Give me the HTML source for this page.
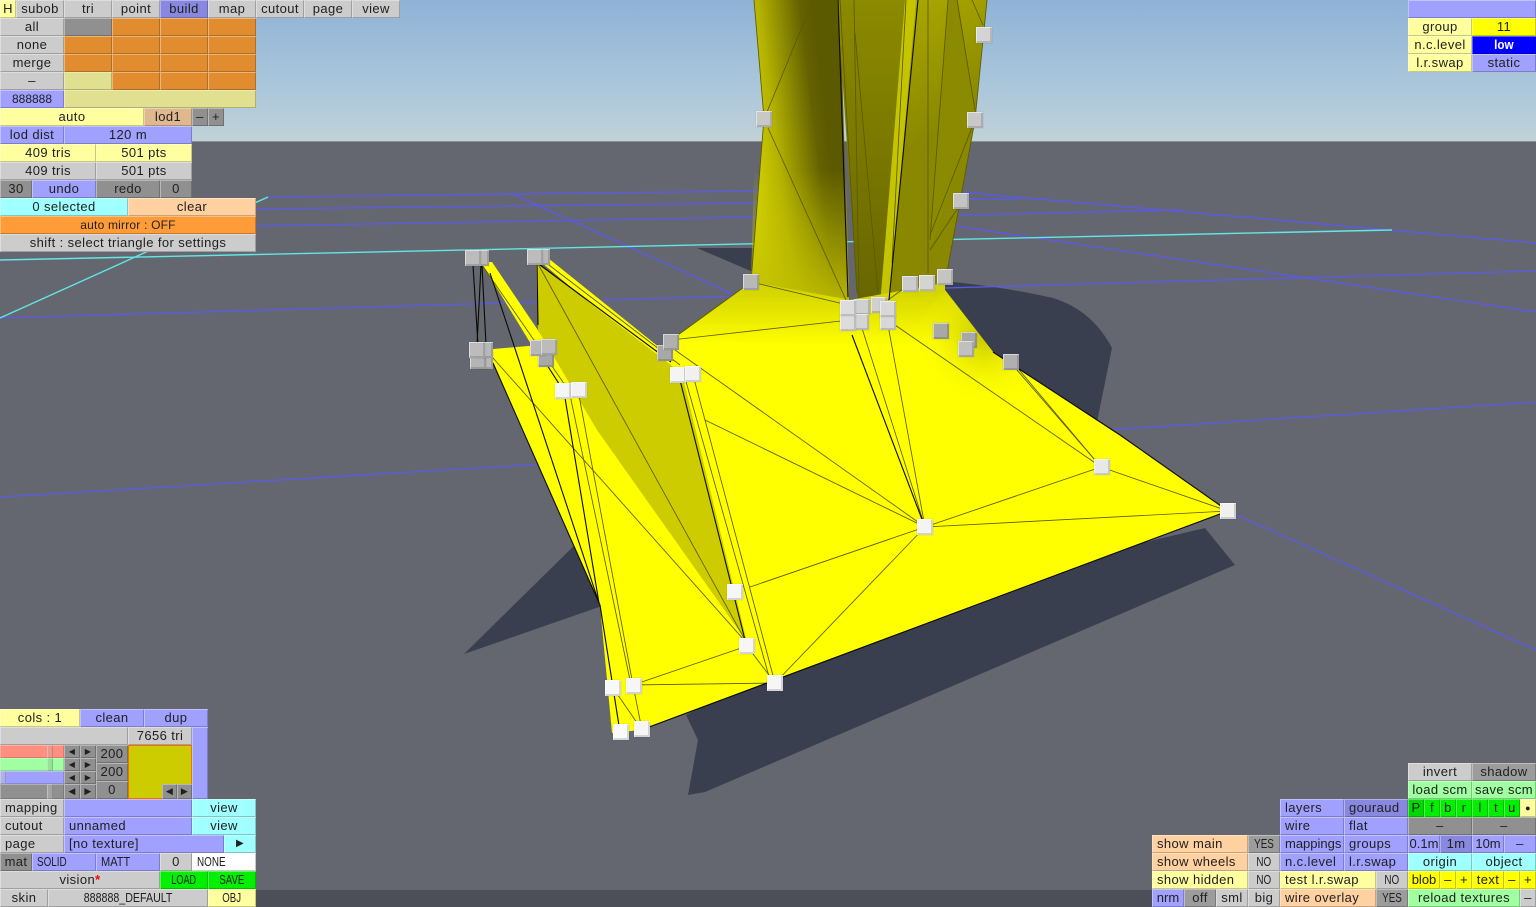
<!DOCTYPE html>
<html><head><meta charset="utf-8"><style>
html,body{margin:0;padding:0;width:1536px;height:907px;overflow:hidden;background:#646770}
#s{position:absolute;left:0;top:0}
.b{position:absolute;height:18px;text-align:center;font:13px/18px "Liberation Sans",sans-serif;letter-spacing:.4px;color:#202020;box-sizing:border-box;white-space:nowrap;box-shadow:inset 1px 1px 0 rgba(255,255,255,.36),inset -1px -1px 0 rgba(0,0,0,.22);background:#ccc}
.l{text-align:left;padding-left:5px}
.x{display:inline-block;transform:scaleX(.76);letter-spacing:0}
.l .x{transform-origin:0 50%}
.e{font-size:12px;letter-spacing:0}
.d{background:#909090}.y{background:#ffffa0}.u{background:#a0a0ff}.v{background:#8888e0}.o{background:#e28c30}.c{background:#a0ffff}.p{background:#ffd0a0}.n{background:#e0e090}.t{background:#e0b890}.a{background:#ff9c38}.G{background:#00f000}.h{background:#a0ffa0}.Y{background:#ffff00}.w{background:#fff}.B{background:#00f;color:#fff;font-weight:bold}.P{background:#00d800}.q{background:#9c9c9c}
.k{position:absolute;width:16px;height:16px;box-sizing:border-box;box-shadow:inset 1px 1px 0 rgba(255,255,255,.5),inset -2px -2px 0 rgba(0,0,0,.14),0 0 0 .5px rgba(0,0,0,.08)}
.s{position:absolute;box-sizing:border-box;box-shadow:inset 1px 1px 0 rgba(255,255,255,.3),inset -1px -1px 0 rgba(0,0,0,.15)}
</style></head><body>
<svg id="s" width="1536" height="907" viewBox="0 0 1536 907" xmlns="http://www.w3.org/2000/svg">
<defs>
<linearGradient id="sky" x1="0" y1="0" x2="0" y2="1"><stop offset="0" stop-color="#8fb2d6"/><stop offset=".6" stop-color="#aac6da"/><stop offset="1" stop-color="#c0d2d8"/></linearGradient>
<linearGradient id="ta" gradientUnits="userSpaceOnUse" x1="755" y1="200" x2="835" y2="190"><stop offset="0" stop-color="#d4d400"/><stop offset=".35" stop-color="#b4b200"/><stop offset=".85" stop-color="#646200"/><stop offset="1" stop-color="#5c5a00"/></linearGradient>
<linearGradient id="tl" gradientUnits="userSpaceOnUse" x1="0" y1="170" x2="0" y2="295"><stop offset="0" stop-color="#c0be00" stop-opacity="0"/><stop offset="1" stop-color="#c0be00" stop-opacity=".85"/></linearGradient>
<linearGradient id="tb" gradientUnits="userSpaceOnUse" x1="870" y1="0" x2="870" y2="300"><stop offset="0" stop-color="#8c8a00"/><stop offset="1" stop-color="#686600"/></linearGradient>
<linearGradient id="tc" gradientUnits="userSpaceOnUse" x1="920" y1="0" x2="985" y2="100"><stop offset="0" stop-color="#a8a600"/><stop offset="1" stop-color="#8a8800"/></linearGradient>
<linearGradient id="fl" gradientUnits="userSpaceOnUse" x1="900" y1="290" x2="900" y2="345"><stop offset="0" stop-color="#d4d400"/><stop offset="1" stop-color="#ffff00"/></linearGradient>
<radialGradient id="fr" gradientUnits="userSpaceOnUse" cx="985" cy="335" r="70"><stop offset="0" stop-color="#c4c400"/><stop offset="1" stop-color="#ffff00" stop-opacity="0"/></radialGradient>
</defs>
<rect width="1536" height="141" fill="url(#sky)"/>
<rect y="141" width="1536" height="766" fill="#646770"/>
<rect y="141" width="1536" height="1" fill="#8a8f92"/>
<rect x="256" y="890" width="896" height="17" fill="#4c4f58"/>
<g fill="#3a3f50">
<polygon points="697,248 760,248 760,275"/>
<path d="M945,282 L953,282 Q1010,288 1053,298 Q1092,310 1112,348 L1097,422 L1000,400 L900,300Z"/>
<polygon points="1205,528 1235,565 705,792 688,795 698,740 686,715 900,600"/>
<polygon points="464,654 590,530 602,606"/>
</g>
<g stroke="#5a5ae8" stroke-width="1.3" fill="none">
<line x1="267" y1="197" x2="760" y2="191"/>
<line x1="256" y1="209" x2="760" y2="203"/>
<line x1="256" y1="226" x2="760" y2="217"/>
<line x1="0" y1="318" x2="740" y2="296"/>
<line x1="515" y1="195" x2="735" y2="295"/>
<line x1="0" y1="497" x2="560" y2="463"/>
<line x1="1090" y1="431" x2="1536" y2="402"/>
<line x1="1228" y1="511" x2="1536" y2="650"/>
<line x1="960" y1="192" x2="1536" y2="243"/>
<line x1="960" y1="215" x2="1180" y2="210"/>
<line x1="955" y1="226" x2="1536" y2="312"/>
<line x1="945" y1="288" x2="1536" y2="271"/>
<line x1="900" y1="200" x2="1020" y2="199"/>
</g>
<g stroke="#62e6e6" stroke-width="1.4" fill="none">
<line x1="0" y1="260" x2="1392" y2="230"/>
<line x1="0" y1="318" x2="268" y2="197"/>
</g>
<!-- tower -->
<polygon points="754,0 840,0 849,300 751,282 764,118" fill="url(#ta)"/>
<polygon points="754,170 846,170 849,300 751,282" fill="url(#tl)"/>
<polygon points="837,0 906,0 888,305 858,305" fill="url(#tb)"/>
<polygon points="905,0 918,0 889,305 880,305" fill="#c4c400"/>
<polygon points="916,0 987,0 975,120 945,283 889,305" fill="url(#tc)"/>
<polygon points="948,0 958,0 975,112 930,250" fill="#8c8a00"/>
<!-- floor -->
<polygon points="493,349 540,345 600,400 671,340 751,282 850,300 945,283 945,290 993,352 1120,435 1228,511 641,730 612,733 600,605 493,363" fill="#ffff00"/>
<polygon points="671,340 751,282 850,300 945,283 945,290 993,352 900,345 850,345" fill="url(#fl)"/>
<polygon points="945,290 993,352 1120,435 1000,440 900,340" fill="url(#fr)"/>
<polygon points="481,262 492,262 585,400 565,400" fill="#ffff00"/>
<polygon points="536,258 548,258 690,372 672,372" fill="#ffff00"/>
<polygon points="536,262 671,365 683,378 747,642 597,430 538,330" fill="#cccc00"/>
<!-- wire -->
<g stroke="#5c5a00" stroke-width=".85" fill="none">
<line x1="813" y1="0" x2="767" y2="112"/><line x1="768" y1="128" x2="846" y2="300"/><line x1="854" y1="0" x2="859" y2="297"/><line x1="840" y1="0" x2="857" y2="293"/><line x1="855" y1="33" x2="878" y2="293"/><line x1="906" y1="0" x2="892" y2="263"/><line x1="928" y1="0" x2="928" y2="273"/><line x1="948" y1="0" x2="930" y2="240"/><line x1="957" y1="0" x2="975" y2="110"/><line x1="972" y1="0" x2="983" y2="25"/><line x1="973" y1="125" x2="930" y2="235"/><line x1="960" y1="205" x2="930" y2="250"/><line x1="754" y1="0" x2="764" y2="118"/><line x1="764" y1="118" x2="751" y2="282"/><line x1="987" y1="0" x2="975" y2="120"/><line x1="975" y1="120" x2="945" y2="283"/>
<line x1="751" y1="282" x2="848" y2="305"/><line x1="671" y1="340" x2="850" y2="320"/><line x1="671" y1="340" x2="751" y2="282"/><line x1="910" y1="284" x2="888" y2="300"/>
<line x1="925" y1="527" x2="1101" y2="467"/><line x1="925" y1="527" x2="1228" y2="511"/><line x1="925" y1="527" x2="861" y2="325"/><line x1="925" y1="527" x2="888" y2="325"/><line x1="925" y1="527" x2="705" y2="420"/><line x1="925" y1="527" x2="675" y2="350"/><line x1="925" y1="527" x2="750" y2="587"/><line x1="925" y1="527" x2="775" y2="683"/>
<line x1="1101" y1="467" x2="895" y2="325"/><line x1="1101" y1="467" x2="1010" y2="362"/><line x1="1095" y1="460" x2="1015" y2="365"/><line x1="1101" y1="467" x2="1228" y2="511"/>
<line x1="537" y1="262" x2="745" y2="640"/><line x1="545" y1="262" x2="680" y2="365"/><line x1="493" y1="358" x2="745" y2="641"/><line x1="578" y1="390" x2="633" y2="685"/><line x1="570" y1="395" x2="630" y2="680"/><line x1="693" y1="375" x2="775" y2="683"/><line x1="685" y1="378" x2="770" y2="680"/><line x1="480" y1="262" x2="565" y2="385"/>
<line x1="747" y1="646" x2="633" y2="685"/><line x1="633" y1="685" x2="775" y2="683"/><line x1="775" y1="683" x2="747" y2="646"/><line x1="613" y1="688" x2="642" y2="730"/><line x1="633" y1="685" x2="642" y2="730"/>
</g>
<g stroke="#0a0a00" stroke-width="1.1" fill="none">
<line x1="838" y1="0" x2="848" y2="297"/><line x1="918" y1="0" x2="889" y2="300"/>
<line x1="473" y1="265" x2="478" y2="345"/><line x1="481" y1="265" x2="477" y2="345"/><line x1="482" y1="265" x2="486" y2="345"/><line x1="490" y1="273" x2="599" y2="603"/>
<line x1="536" y1="262" x2="671" y2="362"/><line x1="547" y1="365" x2="563" y2="390"/><line x1="565" y1="398" x2="599" y2="603"/>
<line x1="852" y1="335" x2="923" y2="522"/><line x1="680" y1="380" x2="745" y2="640"/>
<line x1="493" y1="363" x2="600" y2="605"/><line x1="600" y1="605" x2="620" y2="732"/><line x1="641" y1="730" x2="1228" y2="511"/>
<line x1="993" y1="352" x2="1120" y2="435"/><line x1="1120" y1="435" x2="1228" y2="511"/><line x1="537" y1="262" x2="538" y2="325"/>
</g>
</svg>
<!-- handles -->
<div class="k" style="left:976px;top:27px;background:#d4d4d4"></div>
<div class="k" style="left:756px;top:111px;background:#c8c8c8"></div>
<div class="k" style="left:967px;top:112px;background:#c8c8c8"></div>
<div class="k" style="left:953px;top:193px;background:#c4c4c4"></div>
<div class="k" style="left:743px;top:274px;background:#b8b8b8"></div>
<div class="k" style="left:902px;top:276px;background:#ccc"></div>
<div class="k" style="left:919px;top:275px;background:#d4d4d4"></div>
<div class="k" style="left:937px;top:269px;background:#c4c4c4"></div>
<div class="k" style="left:854px;top:299px;background:#d0d0d0"></div>
<div class="k" style="left:871px;top:297px;background:#d0d0d0"></div>
<div class="k" style="left:853px;top:314px;background:#d4d4d4"></div>
<div class="k" style="left:880px;top:314px;background:#d8d8d8"></div>
<div class="k" style="left:880px;top:301px;background:#d8d8d8"></div>
<div class="k" style="left:840px;top:315px;background:#dcdcdc"></div>
<div class="k" style="left:840px;top:300px;background:#dcdcdc"></div>
<div class="k" style="left:933px;top:323px;background:#a8a8a8"></div>
<div class="k" style="left:961px;top:332px;background:#a8a8a8"></div>
<div class="k" style="left:958px;top:341px;background:#c0c0c0"></div>
<div class="k" style="left:1003px;top:354px;background:#b0b0b0"></div>
<div class="k" style="left:1094px;top:459px;background:#e8e8e8"></div>
<div class="k" style="left:1220px;top:503px;background:#f0f0f0"></div>
<div class="k" style="left:917px;top:519px;background:#f4f4f4"></div>
<div class="k" style="left:473px;top:250px;background:#b8b8b8"></div>
<div class="k" style="left:465px;top:250px;background:#bcbcbc"></div>
<div class="k" style="left:534px;top:249px;background:#b8b8b8"></div>
<div class="k" style="left:527px;top:249px;background:#bcbcbc"></div>
<div class="k" style="left:477px;top:353px;background:#b8b8b8"></div>
<div class="k" style="left:470px;top:353px;background:#b4b4b4"></div>
<div class="k" style="left:477px;top:342px;background:#b8b8b8"></div>
<div class="k" style="left:469px;top:342px;background:#bcbcbc"></div>
<div class="k" style="left:538px;top:351px;background:#a8a8a8"></div>
<div class="k" style="left:530px;top:340px;background:#b8b8b8"></div>
<div class="k" style="left:541px;top:339px;background:#bcbcbc"></div>
<div class="k" style="left:657px;top:345px;background:#a8a8a8"></div>
<div class="k" style="left:663px;top:334px;background:#b0b0b0"></div>
<div class="k" style="left:555px;top:383px;background:#f6f6f6"></div>
<div class="k" style="left:571px;top:382px;background:#f2f2f2"></div>
<div class="k" style="left:670px;top:367px;background:#f4f4f4"></div>
<div class="k" style="left:685px;top:366px;background:#f0f0f0"></div>
<div class="k" style="left:727px;top:584px;background:#f6f6f6"></div>
<div class="k" style="left:739px;top:638px;background:#f6f6f6"></div>
<div class="k" style="left:767px;top:675px;background:#f6f6f6"></div>
<div class="k" style="left:605px;top:680px;background:#f8f8f8"></div>
<div class="k" style="left:626px;top:678px;background:#f6f6f6"></div>
<div class="k" style="left:613px;top:724px;background:#fafafa"></div>
<div class="k" style="left:634px;top:721px;background:#f6f6f6"></div>
<!-- top-left -->
<div class="b y" style="left:0;top:0;width:16px">H</div>
<div class="b" style="left:16px;top:0;width:48px">subob</div>
<div class="b" style="left:64px;top:0;width:48px">tri</div>
<div class="b" style="left:112px;top:0;width:48px">point</div>
<div class="b v" style="left:160px;top:0;width:48px">build</div>
<div class="b" style="left:208px;top:0;width:48px">map</div>
<div class="b" style="left:256px;top:0;width:48px">cutout</div>
<div class="b" style="left:304px;top:0;width:48px">page</div>
<div class="b" style="left:352px;top:0;width:48px">view</div>
<div class="b" style="left:0;top:18px;width:64px">all</div>
<div class="b d" style="left:64px;top:18px;width:48px"></div>
<div class="b o" style="left:112px;top:18px;width:48px"></div>
<div class="b o" style="left:160px;top:18px;width:48px"></div>
<div class="b o" style="left:208px;top:18px;width:48px"></div>
<div class="b" style="left:0;top:36px;width:64px">none</div>
<div class="b o" style="left:64px;top:36px;width:48px"></div>
<div class="b o" style="left:112px;top:36px;width:48px"></div>
<div class="b o" style="left:160px;top:36px;width:48px"></div>
<div class="b o" style="left:208px;top:36px;width:48px"></div>
<div class="b" style="left:0;top:54px;width:64px">merge</div>
<div class="b o" style="left:64px;top:54px;width:48px"></div>
<div class="b o" style="left:112px;top:54px;width:48px"></div>
<div class="b o" style="left:160px;top:54px;width:48px"></div>
<div class="b o" style="left:208px;top:54px;width:48px"></div>
<div class="b" style="left:0;top:72px;width:64px">–</div>
<div class="b n" style="left:64px;top:72px;width:48px"></div>
<div class="b o" style="left:112px;top:72px;width:48px"></div>
<div class="b o" style="left:160px;top:72px;width:48px"></div>
<div class="b o" style="left:208px;top:72px;width:48px"></div>
<div class="b u e" style="left:0;top:90px;width:64px">888888</div>
<div class="b n" style="left:64px;top:90px;width:192px"></div>
<div class="b y" style="left:0;top:108px;width:144px">auto</div>
<div class="b t" style="left:144px;top:108px;width:48px">lod1</div>
<div class="b d" style="left:192px;top:108px;width:16px">–</div>
<div class="b d" style="left:208px;top:108px;width:16px">+</div>
<div class="b u" style="left:0;top:126px;width:64px">lod dist</div>
<div class="b u" style="left:64px;top:126px;width:128px">120 m</div>
<div class="b y" style="left:0;top:144px;width:96px">409 tris</div>
<div class="b y" style="left:96px;top:144px;width:96px">501 pts</div>
<div class="b" style="left:0;top:162px;width:96px">409 tris</div>
<div class="b" style="left:96px;top:162px;width:96px">501 pts</div>
<div class="b d" style="left:0;top:180px;width:32px">30</div>
<div class="b u" style="left:32px;top:180px;width:64px">undo</div>
<div class="b d" style="left:96px;top:180px;width:64px">redo</div>
<div class="b d" style="left:160px;top:180px;width:32px">0</div>
<div class="b c" style="left:0;top:198px;width:128px">0 selected</div>
<div class="b p" style="left:128px;top:198px;width:128px">clear</div>
<div class="b a e" style="left:0;top:216px;width:256px;letter-spacing:.2px">auto mirror : OFF</div>
<div class="b" style="left:0;top:234px;width:256px">shift : select triangle for settings</div>
<!-- top-right -->
<div class="b u" style="left:1408px;top:0;width:128px"></div>
<div class="b y" style="left:1408px;top:18px;width:64px">group</div>
<div class="b Y" style="left:1472px;top:18px;width:64px">11</div>
<div class="b y" style="left:1408px;top:36px;width:64px">n.c.level</div>
<div class="b B" style="left:1472px;top:36px;width:64px"><span class="x" style="transform:scaleX(.9)">low</span></div>
<div class="b y" style="left:1408px;top:54px;width:64px">l.r.swap</div>
<div class="b u" style="left:1472px;top:54px;width:64px">static</div>
<!-- bottom-left -->
<div class="b y" style="left:0;top:709px;width:80px">cols : 1</div>
<div class="b u" style="left:80px;top:709px;width:64px">clean</div>
<div class="b u" style="left:144px;top:709px;width:64px">dup</div>
<div class="b" style="left:0;top:727px;width:128px"></div>
<div class="b" style="left:128px;top:727px;width:64px">7656 tri</div>
<div class="b u" style="left:192px;top:727px;width:16px;height:72px"></div>
<div class="s" style="left:0;top:745px;width:64px;height:13px;background:#ff9080"></div>
<div class="s" style="left:47px;top:745px;width:6px;height:13px;background:#e89a8c"></div>
<div class="s" style="left:0;top:758px;width:64px;height:13px;background:#a0ffa0"></div>
<div class="s" style="left:47px;top:758px;width:6px;height:13px;background:#98e098"></div>
<div class="s" style="left:0;top:771px;width:64px;height:13px;background:#a0a0ff"></div>
<div class="s" style="left:0;top:771px;width:6px;height:13px;background:#b0b0e8"></div>
<div class="s" style="left:0;top:784px;width:64px;height:15px;background:#909090"></div>
<div class="s" style="left:47px;top:784px;width:6px;height:15px;background:#a4a4a4"></div>
<div class="b d" style="left:64px;top:745px;width:16px;height:13px;font-size:8px;line-height:13px">◀</div>
<div class="b d" style="left:80px;top:745px;width:16px;height:13px;font-size:8px;line-height:13px">▶</div>
<div class="b d" style="left:64px;top:758px;width:16px;height:13px;font-size:8px;line-height:13px">◀</div>
<div class="b d" style="left:80px;top:758px;width:16px;height:13px;font-size:8px;line-height:13px">▶</div>
<div class="b d" style="left:64px;top:771px;width:16px;height:13px;font-size:8px;line-height:13px">◀</div>
<div class="b d" style="left:80px;top:771px;width:16px;height:13px;font-size:8px;line-height:13px">▶</div>
<div class="b d" style="left:64px;top:784px;width:16px;height:15px;font-size:9px;line-height:15px">◀</div>
<div class="b d" style="left:80px;top:784px;width:16px;height:15px;font-size:9px;line-height:15px">▶</div>
<div class="b d" style="left:96px;top:745px;width:32px">200</div>
<div class="b d" style="left:96px;top:763px;width:32px">200</div>
<div class="b d" style="left:96px;top:781px;width:32px">0</div>
<div style="position:absolute;left:128px;top:745px;width:64px;height:54px;box-sizing:border-box;background:#cccc00;border:1px solid #ff6a00"></div>
<div class="b d" style="left:162px;top:784px;width:15px;height:15px;font-size:9px;line-height:15px">◀</div>
<div class="b d" style="left:177px;top:784px;width:15px;height:15px;font-size:9px;line-height:15px">▶</div>
<div class="b l" style="left:0;top:799px;width:64px">mapping</div>
<div class="b u" style="left:64px;top:799px;width:128px"></div>
<div class="b c" style="left:192px;top:799px;width:64px">view</div>
<div class="b l" style="left:0;top:817px;width:64px">cutout</div>
<div class="b u l" style="left:64px;top:817px;width:128px">unnamed</div>
<div class="b c" style="left:192px;top:817px;width:64px">view</div>
<div class="b l" style="left:0;top:835px;width:64px">page</div>
<div class="b u l" style="left:64px;top:835px;width:160px">[no texture]</div>
<div class="b c" style="left:224px;top:835px;width:32px;font-size:10px">▶</div>
<div class="b d" style="left:0;top:853px;width:32px">mat</div>
<div class="b u l" style="left:32px;top:853px;width:64px"><span class="x">SOLID</span></div>
<div class="b u l" style="left:96px;top:853px;width:64px"><span class="x" style="transform:scaleX(.85)">MATT</span></div>
<div class="b" style="left:160px;top:853px;width:32px">0</div>
<div class="b w l" style="left:192px;top:853px;width:64px"><span class="x">NONE</span></div>
<div class="b" style="left:0;top:871px;width:160px">vision<b style="color:#f00">*</b></div>
<div class="b G" style="left:160px;top:871px;width:48px"><span class="x" style="transform:scaleX(.7)">LOAD</span></div>
<div class="b G" style="left:208px;top:871px;width:48px"><span class="x" style="transform:scaleX(.74)">SAVE</span></div>
<div class="b" style="left:0;top:889px;width:48px">skin</div>
<div class="b" style="left:48px;top:889px;width:160px"><span class="x" style="transform:scaleX(.82)">888888_DEFAULT</span></div>
<div class="b y" style="left:208px;top:889px;width:48px"><span class="x" style="transform:scaleX(.74)">OBJ</span></div>
<!-- bottom-right -->
<div class="b" style="left:1408px;top:763px;width:64px">invert</div>
<div class="b q" style="left:1472px;top:763px;width:64px">shadow</div>
<div class="b h" style="left:1408px;top:781px;width:64px">load scm</div>
<div class="b h" style="left:1472px;top:781px;width:64px">save scm</div>
<div class="b u l" style="left:1280px;top:799px;width:64px">layers</div>
<div class="b v l" style="left:1344px;top:799px;width:64px">gouraud</div>
<div class="b P" style="left:1408px;top:799px;width:16px">P</div>
<div class="b G" style="left:1424px;top:799px;width:16px">f</div>
<div class="b G" style="left:1440px;top:799px;width:16px">b</div>
<div class="b G" style="left:1456px;top:799px;width:16px">r</div>
<div class="b G" style="left:1472px;top:799px;width:16px">l</div>
<div class="b G" style="left:1488px;top:799px;width:16px">t</div>
<div class="b G" style="left:1504px;top:799px;width:16px">u</div>
<div class="b y" style="left:1520px;top:799px;width:16px;font-size:9px">●</div>
<div class="b u l" style="left:1280px;top:817px;width:64px">wire</div>
<div class="b u l" style="left:1344px;top:817px;width:64px">flat</div>
<div class="b d" style="left:1408px;top:817px;width:64px">–</div>
<div class="b d" style="left:1472px;top:817px;width:64px">–</div>
<div class="b p l" style="left:1152px;top:835px;width:96px">show main</div>
<div class="b q" style="left:1248px;top:835px;width:32px"><span class="x">YES</span></div>
<div class="b u l" style="left:1280px;top:835px;width:64px;letter-spacing:0">mappings</div>
<div class="b u l" style="left:1344px;top:835px;width:64px">groups</div>
<div class="b u" style="left:1408px;top:835px;width:32px;letter-spacing:0">0.1m</div>
<div class="b v" style="left:1440px;top:835px;width:32px">1m</div>
<div class="b u" style="left:1472px;top:835px;width:32px;letter-spacing:0">10m</div>
<div class="b u" style="left:1504px;top:835px;width:32px">–</div>
<div class="b p l" style="left:1152px;top:853px;width:96px">show wheels</div>
<div class="b" style="left:1248px;top:853px;width:32px"><span class="x">NO</span></div>
<div class="b u l" style="left:1280px;top:853px;width:64px">n.c.level</div>
<div class="b u l" style="left:1344px;top:853px;width:64px">l.r.swap</div>
<div class="b c" style="left:1408px;top:853px;width:64px">origin</div>
<div class="b c" style="left:1472px;top:853px;width:64px">object</div>
<div class="b y l" style="left:1152px;top:871px;width:96px">show hidden</div>
<div class="b" style="left:1248px;top:871px;width:32px"><span class="x">NO</span></div>
<div class="b y l" style="left:1280px;top:871px;width:96px">test l.r.swap</div>
<div class="b" style="left:1376px;top:871px;width:32px"><span class="x">NO</span></div>
<div class="b Y" style="left:1408px;top:871px;width:32px;letter-spacing:0">blob</div>
<div class="b Y" style="left:1440px;top:871px;width:16px">–</div>
<div class="b Y" style="left:1456px;top:871px;width:16px">+</div>
<div class="b Y" style="left:1472px;top:871px;width:32px">text</div>
<div class="b Y" style="left:1504px;top:871px;width:16px">–</div>
<div class="b Y" style="left:1520px;top:871px;width:16px">+</div>
<div class="b u" style="left:1152px;top:889px;width:32px;letter-spacing:0">nrm</div>
<div class="b q" style="left:1184px;top:889px;width:32px">off</div>
<div class="b" style="left:1216px;top:889px;width:32px">sml</div>
<div class="b" style="left:1248px;top:889px;width:32px">big</div>
<div class="b p l" style="left:1280px;top:889px;width:96px">wire overlay</div>
<div class="b q" style="left:1376px;top:889px;width:32px"><span class="x">YES</span></div>
<div class="b h" style="left:1408px;top:889px;width:112px">reload textures</div>
<div class="b" style="left:1520px;top:889px;width:16px">–</div>
</body></html>
